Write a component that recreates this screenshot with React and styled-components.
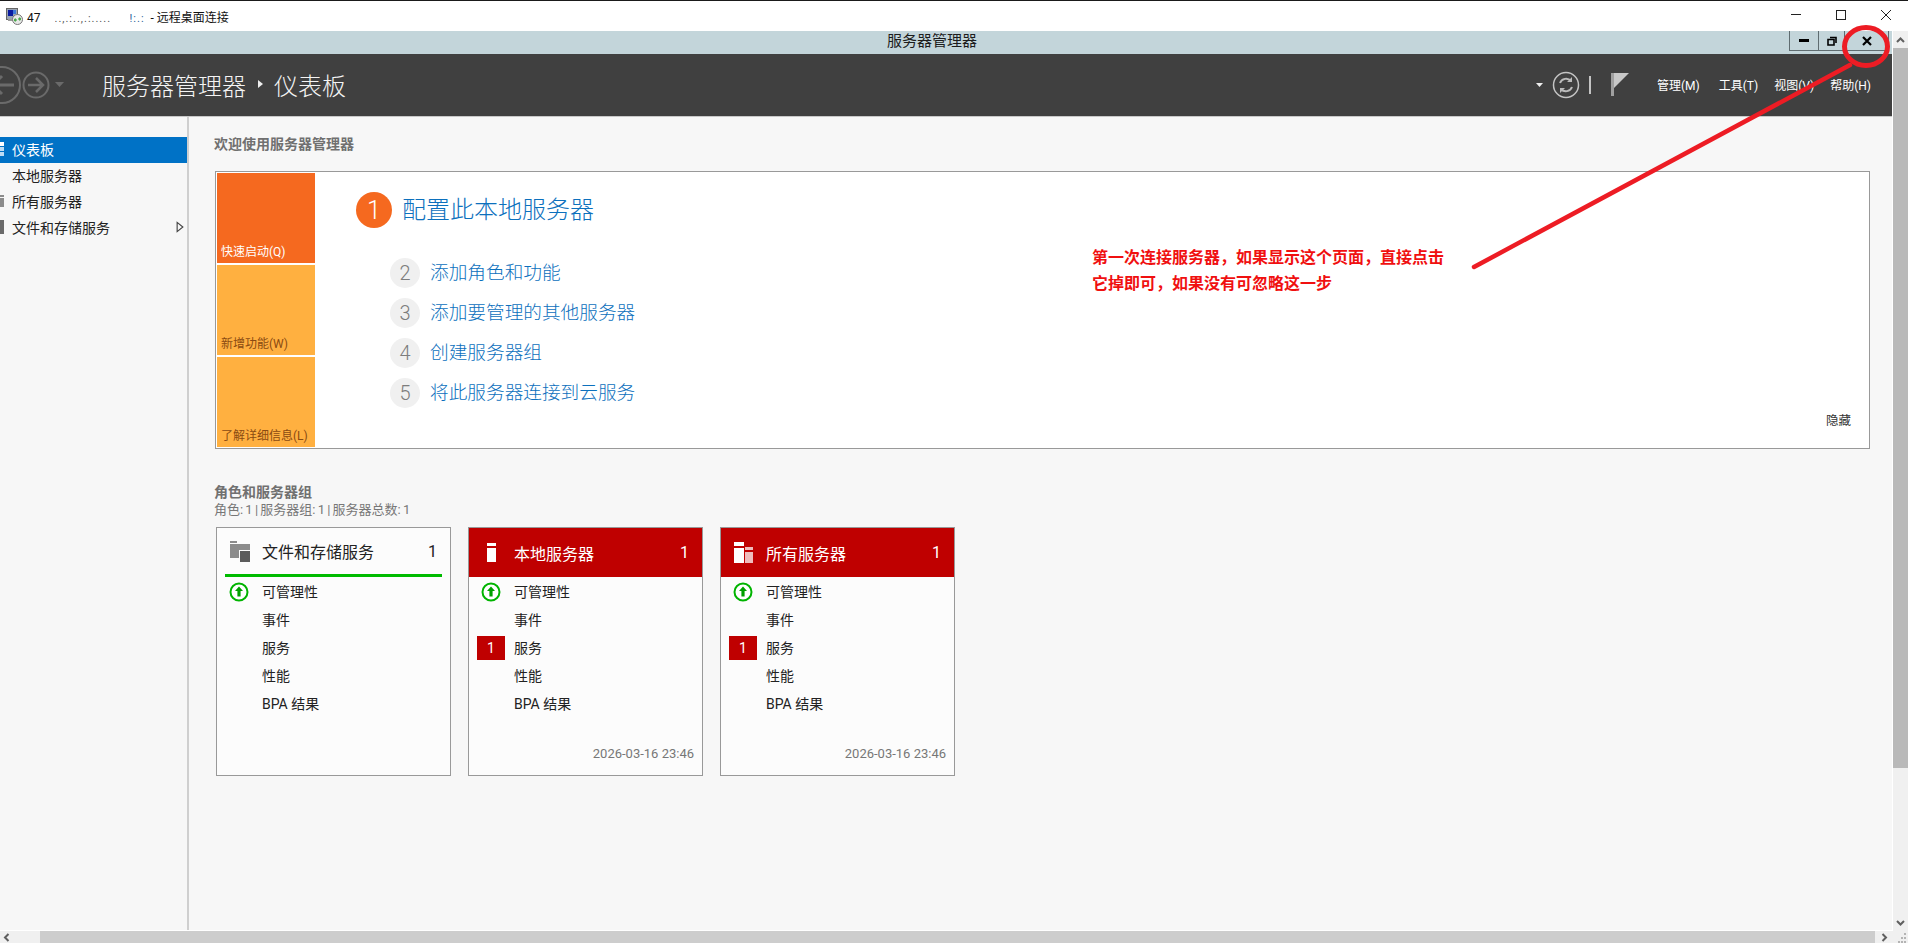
import React from 'react'
import styled, { createGlobalStyle } from 'styled-components'

const GlobalStyle = createGlobalStyle`
    html, body {
        margin: 0;
        padding: 0;
        background: #fff;
        overflow: hidden;
    }
    * {
        box-sizing: border-box;
    }
`

const Page = styled.div`
    position: relative;
    width: 1908px;
    height: 943px;
    display: flex;
    flex-direction: column;
    overflow: hidden;
    font-family: Roboto, 'Noto Sans CJK SC', sans-serif;
    color: #222;
`

const WindowBar = styled.header`
    height: 31px;
    flex: none;
    display: flex;
    align-items: center;
    border-top: 1px solid #1a1a1a;
    background: #fff;
    padding-left: 6px;
`

const WindowTitle = styled.span`
    margin-left: 4px;
    font-size: 12px;
    display: flex;
    align-items: baseline;
    color: #111;
`

const Smudge = styled.span`
    width: ${p => p.$w}px;
    margin-left: ${p => p.$gap}px;
    font-size: 11px;
    letter-spacing: 1px;
    white-space: nowrap;
    overflow: hidden;
    color: ${p => p.$color || '#555'};
`

const WindowSuffix = styled.span`
    margin-left: 1px;
`

const WindowControls = styled.div`
    display: flex;
    margin-left: auto;
`

const WindowButton = styled.div`
    width: 45px;
    height: 30px;
    display: flex;
    align-items: center;
    justify-content: center;
    padding-bottom: 2px;
`

const Desktop = styled.div`
    height: 900px;
    flex: none;
    display: flex;
`

const Session = styled.div`
    width: 1893px;
    display: flex;
    flex-direction: column;
    border-right: 1px solid #fff;
    border-bottom: 1px solid #fff;
`

const TitleBar = styled.div`
    height: 23px;
    flex: none;
    display: flex;
    background: #c3d5da;
`

const TitleText = styled.div`
    flex: 1;
    padding-left: 75px;
    text-align: center;
    font-size: 15px;
    line-height: 21px;
    color: #1c1c1c;
`

const CaptionGroup = styled.div`
    display: flex;
    height: 20px;
    margin-right: 3px;
    border: 1px solid #5f6c70;
    border-top: none;
`

const CaptionButton = styled.div`
    width: ${p => p.$w}px;
    display: flex;
    align-items: center;
    justify-content: center;
    & + & {
        border-left: 1px solid #5f6c70;
    }
`

const Header = styled.div`
    height: 63px;
    flex: none;
    display: flex;
    align-items: center;
    background: #404040;
    border-bottom: 1px solid #c8c8c8;
    color: #fff;
`

const HistoryNav = styled.svg`
    width: 80px;
    height: 62px;
    flex: none;
`

const Breadcrumb = styled.div`
    margin-left: 22px;
    padding-bottom: 2px;
    display: flex;
    align-items: center;
    gap: 11.5px;
    font-size: 24px;
    font-weight: 300;
    color: #f4f4f4;
`

const CrumbArrow = styled.span`
    width: 0;
    height: 0;
    border-left: 5px solid #eee;
    border-top: 4px solid transparent;
    border-bottom: 4px solid transparent;
`

const HeaderTools = styled.div`
    margin-left: auto;
    margin-right: 21px;
    display: flex;
    align-items: center;
`

const ToolIcons = styled.svg`
    width: 96px;
    height: 30px;
    margin-right: 25px;
`

const Menu = styled.nav`
    display: flex;
    gap: 16px;
    font-size: 12px;
    padding-bottom: 1px;
`

const MenuItem = styled.span`
    &:first-child {
        margin-right: 3px;
    }
`

const Body = styled.div`
    flex: 1;
    min-height: 0;
    display: flex;
    background: #f7f7f7;
`

const Sidebar = styled.aside`
    width: 189px;
    flex: none;
    padding-top: 20px;
    border-right: 2px solid #cfcfcf;
`

const NavRow = styled.div`
    height: 26px;
    display: flex;
    align-items: center;
    font-size: 14px;
    padding-bottom: 3px;
    color: ${p => (p.$active ? '#fff' : '#222')};
    background: ${p => (p.$active ? '#0072c6' : 'transparent')};
`

const NavIcon = styled.svg`
    width: 4px;
    height: 16px;
    margin-right: 8px;
    flex: none;
`

const NavArrow = styled.svg`
    width: 8px;
    height: 12px;
    margin-left: auto;
    margin-right: 3px;
`

const Main = styled.main`
    flex: 1;
    min-width: 0;
    padding: 17px 0 0 25px;
`

const SectionTitle = styled.h2`
    margin: 0;
    font-size: 14px;
    line-height: 20px;
    font-weight: 700;
    color: #707070;
`

const Banner = styled.section`
    width: 1655px;
    height: 278px;
    margin: 17px 0 0 1px;
    display: flex;
    background: #fff;
    border: 1px solid #999;
`

const TileRail = styled.div`
    width: 100px;
    flex: none;
    padding: 1px;
    display: flex;
    flex-direction: column;
    gap: 2px;
`

const Tile = styled.div`
    height: 90px;
    padding: 0 0 2px 4px;
    display: flex;
    align-items: flex-end;
    font-size: 12px;
    line-height: 18px;
    background: ${p => (p.$primary ? '#f5691f' : '#ffb040')};
    color: ${p => (p.$primary ? '#fff' : '#8a4b12')};
`

const Steps = styled.div`
    margin-left: 40px;
    padding-top: 20px;
`

const LeadStep = styled.div`
    height: 36px;
    display: flex;
    align-items: center;
    gap: 10px;
    margin-bottom: 30px;
    font-size: 24px;
    font-weight: 300;
    color: #0c70bd;
`

const LeadNumber = styled.span`
    width: 36px;
    height: 36px;
    border-radius: 50%;
    display: flex;
    align-items: center;
    justify-content: center;
    background: #f5691f;
    color: #fff;
    font-size: 25px;
    font-weight: 300;
`

const Step = styled.div`
    height: 30px;
    margin: 0 0 10px 34px;
    display: flex;
    align-items: center;
    gap: 10px;
    font-size: 18.67px;
    font-weight: 300;
    color: #0c70bd;
`

const StepLabel = styled.span`
    line-height: 26px;
`

const StepNumber = styled.span`
    width: 30px;
    height: 30px;
    border-radius: 50%;
    display: flex;
    align-items: center;
    justify-content: center;
    background: #f0f0f0;
    color: #7d7d7d;
    font-size: 20px;
    font-weight: 300;
`

const HideLink = styled.span`
    margin-left: auto;
    margin-right: 18px;
    align-self: flex-end;
    margin-bottom: 19px;
    font-size: 12.5px;
    color: #333;
`

const Groups = styled.section`
    margin-top: 33px;
`

const GroupStats = styled.div`
    font-size: 13px;
    line-height: 15px;
    word-spacing: -1px;
    color: #777;
`

const CardRow = styled.div`
    display: flex;
    gap: 17px;
    margin: 10px 0 0 2px;
`

const Card = styled.article`
    width: 235px;
    height: 249px;
    display: flex;
    flex-direction: column;
    border: 1px solid #999;
    background: #fcfcfc;
`

const CardHeader = styled.div`
    height: 49px;
    flex: none;
    display: flex;
    align-items: center;
    padding-right: ${p => (p.$alert ? 13 : 5)}px;
    margin: ${p => (p.$alert ? '0' : '0 8px')};
    font-size: 16px;
    background: ${p => (p.$alert ? '#bf0000' : 'transparent')};
    color: ${p => (p.$alert ? '#fff' : '#222')};
    border-bottom: ${p => (p.$alert ? 'none' : '3px solid #00bb00')};
`

const CardIconSlot = styled.span`
    width: ${p => (p.$alert ? 45 : 37)}px;
    flex: none;
    display: flex;
    justify-content: center;
    padding-left: ${p => (p.$alert ? 1 : 0)}px;
    padding-right: ${p => (p.$alert ? 0 : 7)}px;
`

const CardCount = styled.span`
    margin-left: auto;
`

const CardRows = styled.div`
    padding: 1px 8px 0;
`

const StatusRow = styled.div`
    height: 28px;
    display: grid;
    grid-template-columns: 28px 1fr;
    column-gap: 9px;
    align-items: center;
    font-size: 14px;
`

const StatusSlot = styled.span`
    display: flex;
    justify-content: center;
`

const StatusLabel = styled.span`
    padding-bottom: 2px;
`

const Badge = styled.span`
    height: 24px;
    display: flex;
    align-items: center;
    justify-content: center;
    background: #bf0000;
    color: #fff;
    font-size: 14px;
`

const CardDate = styled.div`
    margin-top: auto;
    padding: 0 8px 12px;
    text-align: right;
    font-size: 13px;
    line-height: 18px;
    color: #777;
`

const VScroll = styled.div`
    width: 15px;
    flex: none;
    display: flex;
    flex-direction: column;
    background: #f0f0f0;
`

const ScrollButton = styled.div`
    height: 17px;
    flex: none;
    display: flex;
    align-items: center;
    justify-content: center;
`

const VThumb = styled.div`
    height: 720px;
    flex: none;
    background: #b9b9b9;
`

const VTrack = styled.div`
    flex: 1;
`

const HScroll = styled.div`
    height: 12px;
    flex: none;
    display: flex;
    background: #f0f0f0;
`

const HEnd = styled.div`
    width: ${p => p.$w}px;
    flex: none;
    display: flex;
    align-items: center;
    padding-left: ${p => p.$pad}px;
`

const HThumb = styled.div`
    flex: 1;
    background: #cdcdcd;
`

const Corner = styled.svg`
    width: 15px;
    height: 12px;
    flex: none;
`

const Annotation = styled.p`
    position: absolute;
    left: 1092px;
    top: 243px;
    margin: 0;
    width: 355px;
    font-size: 16px;
    line-height: 26px;
    font-weight: 700;
    color: #f01010;
    font-family: 'Noto Sans CJK SC', sans-serif;
`

const Markup = styled.svg`
    position: absolute;
    left: 0;
    top: 0;
    pointer-events: none;
`

const RdpIcon = () => (
    <svg width="17" height="17" viewBox="0 0 17 17">
        <rect x="0.5" y="0.5" width="11" height="11" fill="#9aa4b4" stroke="#666" />
        <rect x="2" y="2" width="5" height="6" fill="#0a1aa0" />
        <rect x="7" y="2" width="3" height="4" fill="#3f78d8" />
        <rect x="2" y="11" width="9" height="2" fill="#999" />
        <circle cx="11.5" cy="11.5" r="5" fill="#e8e8e8" stroke="#777" />
        <path d="M8.5 12h2.5M9.5 10.5 8.5 12l1 1.5M14.5 11h-2.5M13.5 9.5l1 1.5-1 1.5" stroke="#2a9a2a" strokeWidth="1.1" fill="none" />
    </svg>
)

const ChevronUp = () => (
    <svg width="9" height="6" viewBox="0 0 9 6">
        <path d="M1 5l3.5-3.5L8 5" stroke="#606060" strokeWidth="2" fill="none" />
    </svg>
)

const ChevronDown = () => (
    <svg width="9" height="6" viewBox="0 0 9 6">
        <path d="M1 1l3.5 3.5L8 1" stroke="#606060" strokeWidth="2" fill="none" />
    </svg>
)

const ChevronSide = ({ right }) => (
    <svg width="7" height="9" viewBox="0 0 7 9">
        <path d={right ? 'M1.5 1l3.5 3.5L1.5 8' : 'M5.5 1L2 4.5 5.5 8'} stroke="#606060" strokeWidth="2" fill="none" />
    </svg>
)

const StatusUp = () => (
    <svg width="20" height="20" viewBox="0 0 20 20">
        <circle cx="10" cy="10" r="8.5" fill="#fff" stroke="#00b400" strokeWidth="2" />
        <path d="M10 4.5l4 4.5h-2.4v5.5H8.400V9H6z" fill="#00a000" />
    </svg>
)

const FolderIcon = () => (
    <svg width="20" height="21" viewBox="0 0 20 21">
        <rect width="7" height="2" fill="#8c8c8c" />
        <rect y="3" width="20" height="14" fill="#8c8c8c" />
        <rect x="9.500" y="9.500" width="11" height="12" fill="#5c5c5c" stroke="#fcfcfc" />
    </svg>
)

const LocalServerIcon = () => (
    <svg width="10" height="19" viewBox="0 0 10 19">
        <rect width="9" height="3" fill="#fff" />
        <rect y="5" width="9" height="14" fill="#fff" />
    </svg>
)

const AllServersIcon = () => (
    <svg width="20" height="21" viewBox="0 0 20 21">
        <rect width="10" height="4" fill="#fff" />
        <rect y="6" width="10" height="15" fill="#fff" />
        <rect x="11" y="5" width="8" height="3" fill="#efbcbc" />
        <rect x="11" y="10" width="8" height="11" fill="#efbcbc" />
    </svg>
)

const GroupCard = ({ title, icon, alert, date }) => (
    <Card>
        <CardHeader $alert={alert}>
            <CardIconSlot $alert={alert}>{icon}</CardIconSlot>
            {title}
            <CardCount>1</CardCount>
        </CardHeader>
        <CardRows>
            <StatusRow>
                <StatusSlot><StatusUp /></StatusSlot>
                <StatusLabel>可管理性</StatusLabel>
            </StatusRow>
            <StatusRow><span /><StatusLabel>事件</StatusLabel></StatusRow>
            <StatusRow>{alert ? <Badge>1</Badge> : <span />}<StatusLabel>服务</StatusLabel></StatusRow>
            <StatusRow><span /><StatusLabel>性能</StatusLabel></StatusRow>
            <StatusRow><span /><StatusLabel>BPA 结果</StatusLabel></StatusRow>
        </CardRows>
        {date && <CardDate>{date}</CardDate>}
    </Card>
)

export default function App() {
    return (
        <Page>
            <GlobalStyle />
            <WindowBar>
                <RdpIcon />
                <WindowTitle>
                    47
                    <Smudge $w={62} $gap={14}>..,.:..,.:.....</Smudge>
                    <Smudge $w={20} $gap={13} $color="#2a5f9a">!:.:</Smudge>
                    <WindowSuffix>- 远程桌面连接</WindowSuffix>
                </WindowTitle>
                <WindowControls>
                    <WindowButton>
                        <svg width="10" height="2" viewBox="0 0 10 2"><rect width="10" height="1" fill="#222" /></svg>
                    </WindowButton>
                    <WindowButton>
                        <svg width="10" height="10" viewBox="0 0 10 10"><rect x="0.5" y="0.5" width="9" height="9" fill="none" stroke="#222" /></svg>
                    </WindowButton>
                    <WindowButton>
                        <svg width="10" height="10" viewBox="0 0 10 10"><path d="M0 0l10 10M10 0L0 10" stroke="#222" /></svg>
                    </WindowButton>
                </WindowControls>
            </WindowBar>
            <Desktop>
                <Session>
                    <TitleBar>
                        <TitleText>服务器管理器</TitleText>
                        <CaptionGroup>
                            <CaptionButton $w={28}>
                                <svg width="10" height="4" viewBox="0 0 10 4"><rect width="10" height="3" fill="#000" /></svg>
                            </CaptionButton>
                            <CaptionButton $w={26}>
                                <svg width="10" height="10" viewBox="0 0 10 10">
                                    <path d="M3 1.500h6V7M1 3.500h6v5.500H1z" fill="none" stroke="#000" strokeWidth="1.600" />
                                </svg>
                            </CaptionButton>
                            <CaptionButton $w={44}>
                                <svg width="10" height="10" viewBox="0 0 10 10"><path d="M1 1l8 8M9 1L1 9" stroke="#000" strokeWidth="2.200" /></svg>
                            </CaptionButton>
                        </CaptionGroup>
                    </TitleBar>
                    <Header>
                        <HistoryNav viewBox="0 0 80 62">
                            <g fill="none" stroke="#6a6a6a" strokeWidth="2">
                                <circle cx="2" cy="31" r="18" />
                                <path d="M-6 31H14M2 22l-9 9 9 9" strokeWidth="3" />
                                <circle cx="36" cy="31" r="12.500" />
                                <path d="M28 31h15M36 24l7 7-7 7" strokeWidth="2.500" />
                            </g>
                            <path d="M55 28h9l-4.500 5z" fill="#6a6a6a" />
                        </HistoryNav>
                        <Breadcrumb>
                            服务器管理器
                            <CrumbArrow />
                            仪表板
                        </Breadcrumb>
                        <HeaderTools>
                            <ToolIcons viewBox="0 0 96 30">
                                <path d="M0 13h7l-3.500 4z" fill="#eee" />
                                <circle cx="30" cy="15" r="12.500" fill="none" stroke="#c4c4c4" strokeWidth="1.500" />
                                <path d="M24 13a6.500 6.500 0 0 1 11-2M36 17a6.500 6.500 0 0 1-11 2" fill="none" stroke="#bcbcbc" strokeWidth="2" />
                                <path d="M36 7v5h-5zM24 23v-5h5z" fill="#bcbcbc" />
                                <rect x="53" y="6" width="2" height="18" fill="#c4c4c4" />
                                <rect x="75" y="3" width="3" height="23" fill="#a0a0a0" />
                                <path d="M78 3h15l-15 15z" fill="#c8c8c8" />
                            </ToolIcons>
                            <Menu>
                                <MenuItem>管理(M)</MenuItem>
                                <MenuItem>工具(T)</MenuItem>
                                <MenuItem>视图(V)</MenuItem>
                                <MenuItem>帮助(H)</MenuItem>
                            </Menu>
                        </HeaderTools>
                    </Header>
                    <Body>
                        <Sidebar>
                            <NavRow $active>
                                <NavIcon viewBox="0 0 4 16">
                                    <rect y="1" width="4" height="4" fill="#fff" />
                                    <rect y="6" width="4" height="4" fill="#bcdcf4" />
                                    <rect y="11" width="4" height="4" fill="#bcdcf4" />
                                </NavIcon>
                                仪表板
                            </NavRow>
                            <NavRow><NavIcon />本地服务器</NavRow>
                            <NavRow>
                                <NavIcon viewBox="0 0 4 16">
                                    <rect y="2" width="4" height="2" fill="#8c8c8c" />
                                    <rect y="5" width="4" height="9" fill="#8c8c8c" />
                                </NavIcon>
                                所有服务器
                            </NavRow>
                            <NavRow>
                                <NavIcon viewBox="0 0 4 16">
                                    <rect y="1" width="4" height="14" fill="#6a6a6a" />
                                </NavIcon>
                                文件和存储服务
                                <NavArrow viewBox="0 0 7 10">
                                    <path d="M1 1l5 4-5 4z" fill="none" stroke="#444" />
                                </NavArrow>
                            </NavRow>
                        </Sidebar>
                        <Main>
                            <SectionTitle>欢迎使用服务器管理器</SectionTitle>
                            <Banner>
                                <TileRail>
                                    <Tile $primary>快速启动(Q)</Tile>
                                    <Tile>新增功能(W)</Tile>
                                    <Tile>了解详细信息(L)</Tile>
                                </TileRail>
                                <Steps>
                                    <LeadStep>
                                        <LeadNumber>1</LeadNumber>
                                        <StepLabel>配置此本地服务器</StepLabel>
                                    </LeadStep>
                                    <Step><StepNumber>2</StepNumber><StepLabel>添加角色和功能</StepLabel></Step>
                                    <Step><StepNumber>3</StepNumber><StepLabel>添加要管理的其他服务器</StepLabel></Step>
                                    <Step><StepNumber>4</StepNumber><StepLabel>创建服务器组</StepLabel></Step>
                                    <Step><StepNumber>5</StepNumber><StepLabel>将此服务器连接到云服务</StepLabel></Step>
                                </Steps>
                                <HideLink>隐藏</HideLink>
                            </Banner>
                            <Groups>
                                <SectionTitle>角色和服务器组</SectionTitle>
                                <GroupStats>角色: 1 | 服务器组: 1 | 服务器总数: 1</GroupStats>
                                <CardRow>
                                    <GroupCard title="文件和存储服务" icon={<FolderIcon />} />
                                    <GroupCard title="本地服务器" icon={<LocalServerIcon />} alert date="2026-03-16 23:46" />
                                    <GroupCard title="所有服务器" icon={<AllServersIcon />} alert date="2026-03-16 23:46" />
                                </CardRow>
                            </Groups>
                        </Main>
                    </Body>
                </Session>
                <VScroll>
                    <ScrollButton><ChevronUp /></ScrollButton>
                    <VThumb />
                    <VTrack />
                    <ScrollButton><ChevronDown /></ScrollButton>
                </VScroll>
            </Desktop>
            <HScroll>
                <HEnd $w={40} $pad={3}><ChevronSide /></HEnd>
                <HThumb />
                <HEnd $w={18} $pad={6}><ChevronSide right /></HEnd>
                <Corner viewBox="0 0 15 12">
                    <path d="M11 2h2v2h-2zM8 6h2v2H8zM11 6h2v2h-2zM5 10h2v2H5zM8 10h2v2H8zM11 10h2v2h-2z" fill="#b4b4b4" />
                </Corner>
            </HScroll>
            <Annotation>
                第一次连接服务器，如果显示这个页面，直接点击它掉即可，如果没有可忽略这一步
            </Annotation>
            <Markup width="1908" height="943" viewBox="0 0 1908 943">
                <ellipse cx="1866" cy="46.500" rx="21.500" ry="19" fill="none" stroke="#ed1c24" strokeWidth="5" />
                <line x1="1474" y1="267" x2="1850" y2="65" stroke="#ed1c24" strokeWidth="4.500" strokeLinecap="round" />
            </Markup>
        </Page>
    )
}
